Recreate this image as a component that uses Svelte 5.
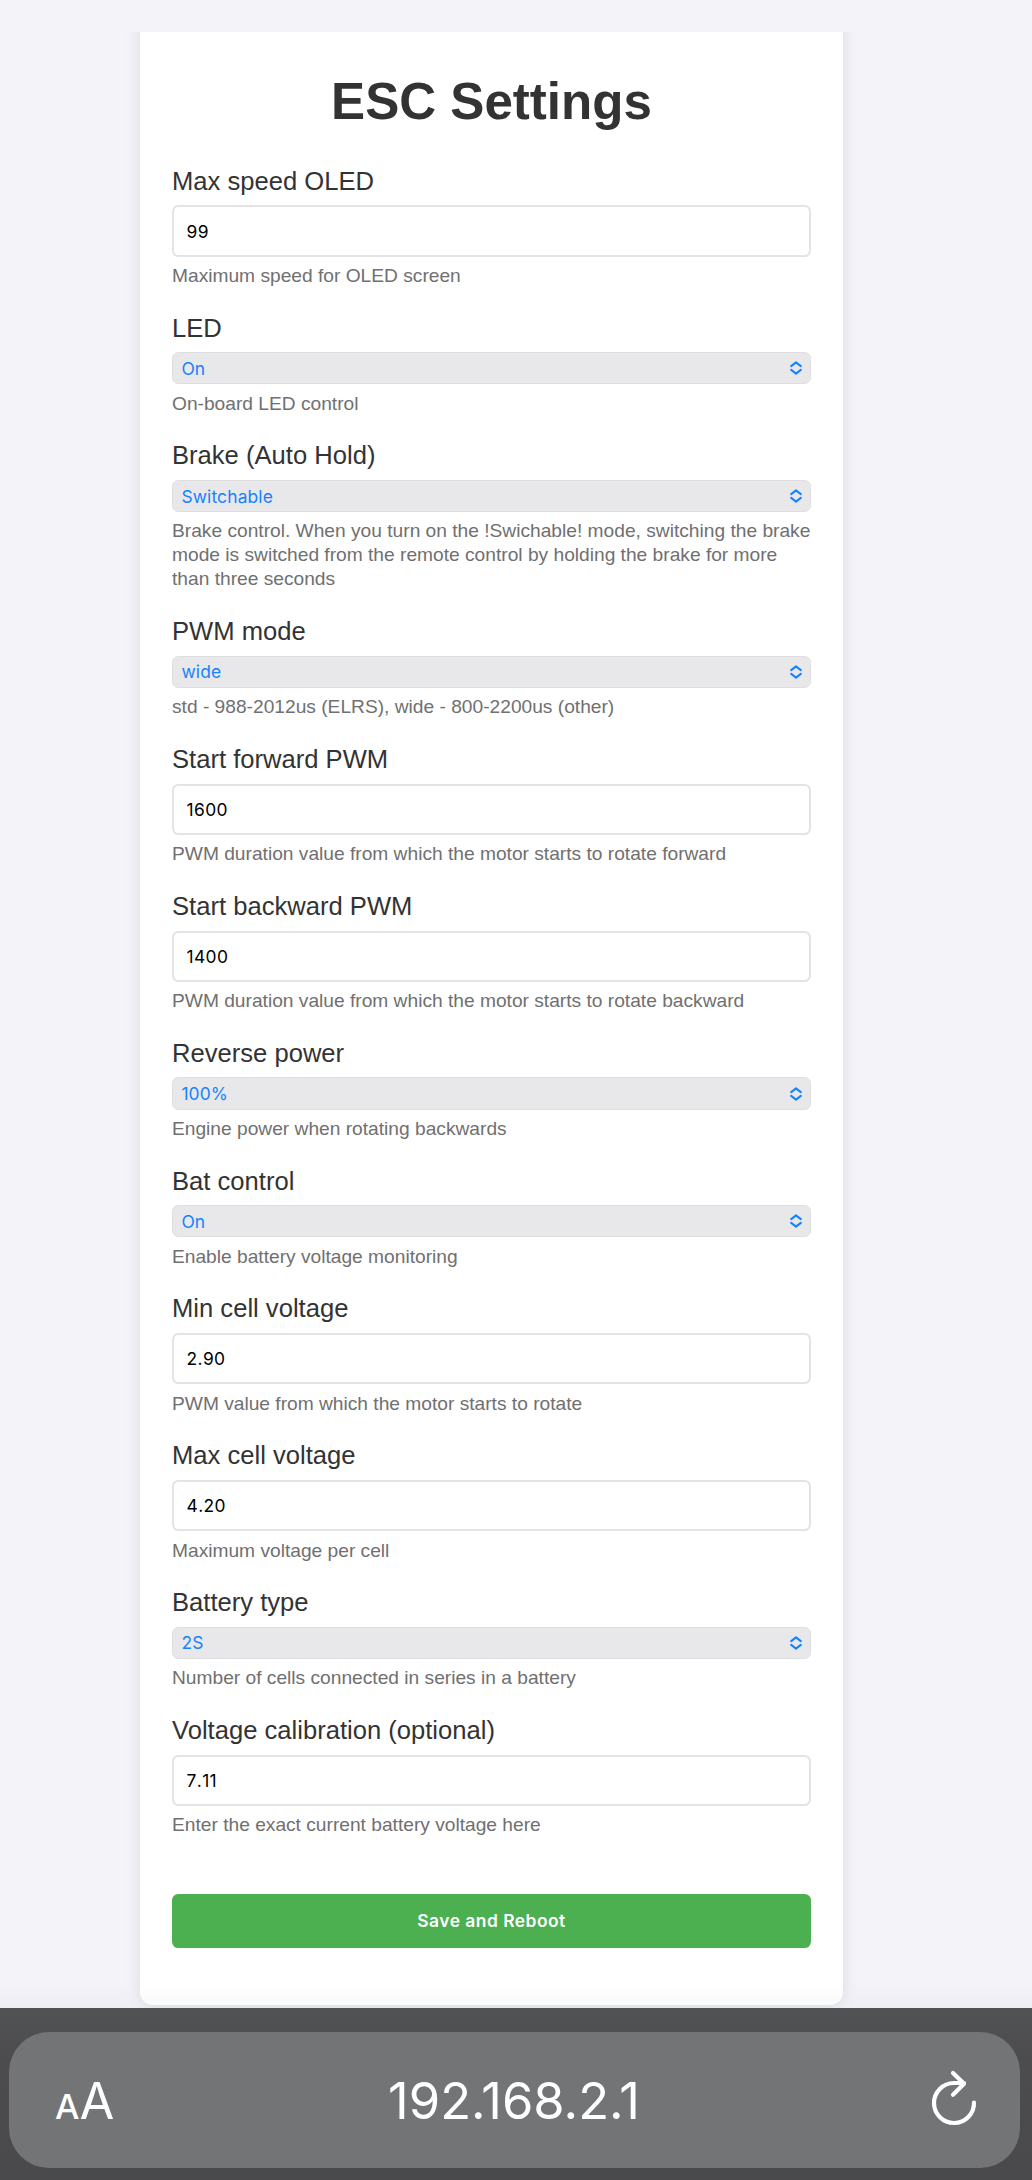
<script>
  const fields = [
    { id: 'max-speed', label: 'Max speed OLED', value: '99', hint: 'Maximum speed for OLED screen' },
    { id: 'led', label: 'LED', value: 'On', options: ['On', 'Off'], hint: 'On-board LED control' },
    {
      id: 'brake', label: 'Brake (Auto Hold)', value: 'Switchable', options: ['Off', 'On', 'Switchable'],
      hint: 'Brake control. When you turn on the !Swichable! mode, switching the brake mode is switched from the remote control by holding the brake for more than three seconds'
    },
    { id: 'pwm-mode', label: 'PWM mode', value: 'wide', options: ['std', 'wide'], hint: 'std - 988-2012us (ELRS), wide - 800-2200us (other)' },
    { id: 'fwd-pwm', label: 'Start forward PWM', value: '1600', hint: 'PWM duration value from which the motor starts to rotate forward' },
    { id: 'back-pwm', label: 'Start backward PWM', value: '1400', hint: 'PWM duration value from which the motor starts to rotate backward' },
    { id: 'reverse', label: 'Reverse power', value: '100%', options: ['25%', '50%', '75%', '100%'], hint: 'Engine power when rotating backwards' },
    { id: 'bat-control', label: 'Bat control', value: 'On', options: ['On', 'Off'], hint: 'Enable battery voltage monitoring' },
    { id: 'min-cell', label: 'Min cell voltage', value: '2.90', hint: 'PWM value from which the motor starts to rotate' },
    { id: 'max-cell', label: 'Max cell voltage', value: '4.20', hint: 'Maximum voltage per cell' },
    { id: 'bat-type', label: 'Battery type', value: '2S', options: ['1S', '2S', '3S', '4S'], hint: 'Number of cells connected in series in a battery' },
    { id: 'calibration', label: 'Voltage calibration (optional)', value: '7.11', hint: 'Enter the exact current battery voltage here' }
  ];
</script>

<div class="screen">
  <main>
    <form class="card" onsubmit={(e) => e.preventDefault()}>
      <h1>ESC Settings</h1>
      {#each fields as f (f.id)}
        <div class="group">
          <label for={f.id}>{f.label}</label>
          {#if f.options}
            <div class="select">
              <select id={f.id} value={f.value}>
                {#each f.options as o}<option value={o}>{o}</option>{/each}
              </select>
              <svg class="chevrons" viewBox="0 0 12 14" aria-hidden="true">
                <path d="M1.2 5.1 6 1.4l4.8 3.7M1.2 8.9 6 12.6l4.8-3.7" />
              </svg>
            </div>
          {:else}
            <input id={f.id} type="text" value={f.value} />
          {/if}
          <p>{f.hint}</p>
        </div>
      {/each}
      <button type="submit">Save and Reboot</button>
    </form>
  </main>

  <footer>
    <div class="pill">
      <div class="text-size"><span class="small">A</span><span class="big">A</span></div>
      <div class="url">192.168.2.1</div>
      <svg class="reload" viewBox="0 0 48 60" aria-hidden="true">
        <path d="M44 32.7A20 20 0 1 1 24 13h10M23 3l11 10.8L23 24.7" />
      </svg>
    </div>
  </footer>
</div>

<style>
  :global(body) {
    margin: 0;
    background: #f4f3fa;
  }
  .screen {
    display: flex;
    flex-direction: column;
    width: 1032px;
    height: 2180px;
    padding-top: 32px;
    box-sizing: border-box;
    overflow: hidden;
    background: #f4f3fa;
    font-family: 'Liberation Sans', Arial, sans-serif;
    color: #333;
  }
  main {
    position: relative;
    height: 1976px;
    flex: none;
    overflow: hidden;
  }
  /* soft shade where the page meets the toolbar */
  main::after {
    content: '';
    position: absolute;
    inset: auto 0 0 0;
    height: 28px;
    background: linear-gradient(rgba(0, 0, 0, 0), rgba(0, 0, 0, 0.02));
    pointer-events: none;
  }
  .card {
    width: 703px;
    height: 1993px;
    margin: -20px 0 0 140px;
    padding: 60.1px 32px 0;
    box-sizing: border-box;
    background: #fff;
    border-radius: 12.8px;
    box-shadow: 0 0 16px rgba(0, 0, 0, 0.1);
  }
  h1 {
    margin: 0 0 33.6px;
    font-size: 51.1px;
    line-height: 60px;
    text-align: center;
  }
  .group {
    margin-bottom: 24.68px;
  }
  label {
    display: block;
    margin-bottom: 9.7px;
    font-size: 25.6px;
    line-height: 30px;
  }
  input {
    display: block;
    width: 100%;
    height: 51.3px;
    padding: 0.5px 12.6px 0;
    box-sizing: border-box;
    border: 2px solid #e4e4e4;
    border-radius: 6.4px;
    background: #fff;
    color: #000;
    font: 17.4px Inter, sans-serif;
    letter-spacing: 0.35px;
    font-kerning: none;
    outline: none;
  }
  .select {
    display: flex;
    align-items: center;
    height: 32.1px;
    padding: 0 8px 0 8.4px;
    box-sizing: border-box;
    border: 1.6px solid #dfdfe1;
    border-radius: 6.4px;
    background: #e8e8ea;
  }
  select {
    flex: 1;
    padding: 0;
    border: 0;
    appearance: none;
    background: none;
    color: #1583ff;
    font: 17.4px Inter, sans-serif;
    letter-spacing: 0.15px;
    outline: none;
  }
  .chevrons {
    width: 12px;
    height: 14px;
    fill: none;
    stroke: #1583ff;
    stroke-width: 2;
    stroke-linecap: round;
    stroke-linejoin: round;
  }
  p {
    margin: 7.3px 0 0;
    font-size: 19.18px;
    line-height: 24px;
    color: #707070;
  }
  button {
    display: block;
    width: 100%;
    height: 54.2px;
    margin-top: 56.4px;
    padding: 0;
    border: 0;
    border-radius: 6.4px;
    background: #4caf50;
    color: #fff;
    font: 600 17.4px Inter, sans-serif;
    letter-spacing: 0.5px;
  }
  footer {
    flex: 1;
    padding: 24px 12px 12px 9px;
    background: linear-gradient(#525355, #4c4c4e 30%, #4a4a4c);
  }
  .pill {
    display: grid;
    grid-template-columns: 120px 1fr 120px;
    align-items: center;
    height: 136px;
    padding: 0 42px 0 46px;
    box-sizing: border-box;
    border-radius: 40px;
    background: #737476;
    color: #fff;
    font-family: Inter, sans-serif;
  }
  .text-size {
    display: flex;
    align-items: baseline;
    padding-top: 7px;
    line-height: 60px;
  }
  .small {
    font-size: 34.5px;
    font-weight: 500;
  }
  .big {
    font-size: 50.5px;
  }
  .url {
    padding-top: 2px;
    font-size: 50.7px;
    line-height: 60px;
    text-align: center;
    margin-right: 5px;
  }
  .reload {
    justify-self: end;
    width: 48px;
    height: 60px;
    fill: none;
    stroke: #fff;
    stroke-width: 4.2;
    stroke-linecap: round;
    stroke-linejoin: round;
  }
</style>
